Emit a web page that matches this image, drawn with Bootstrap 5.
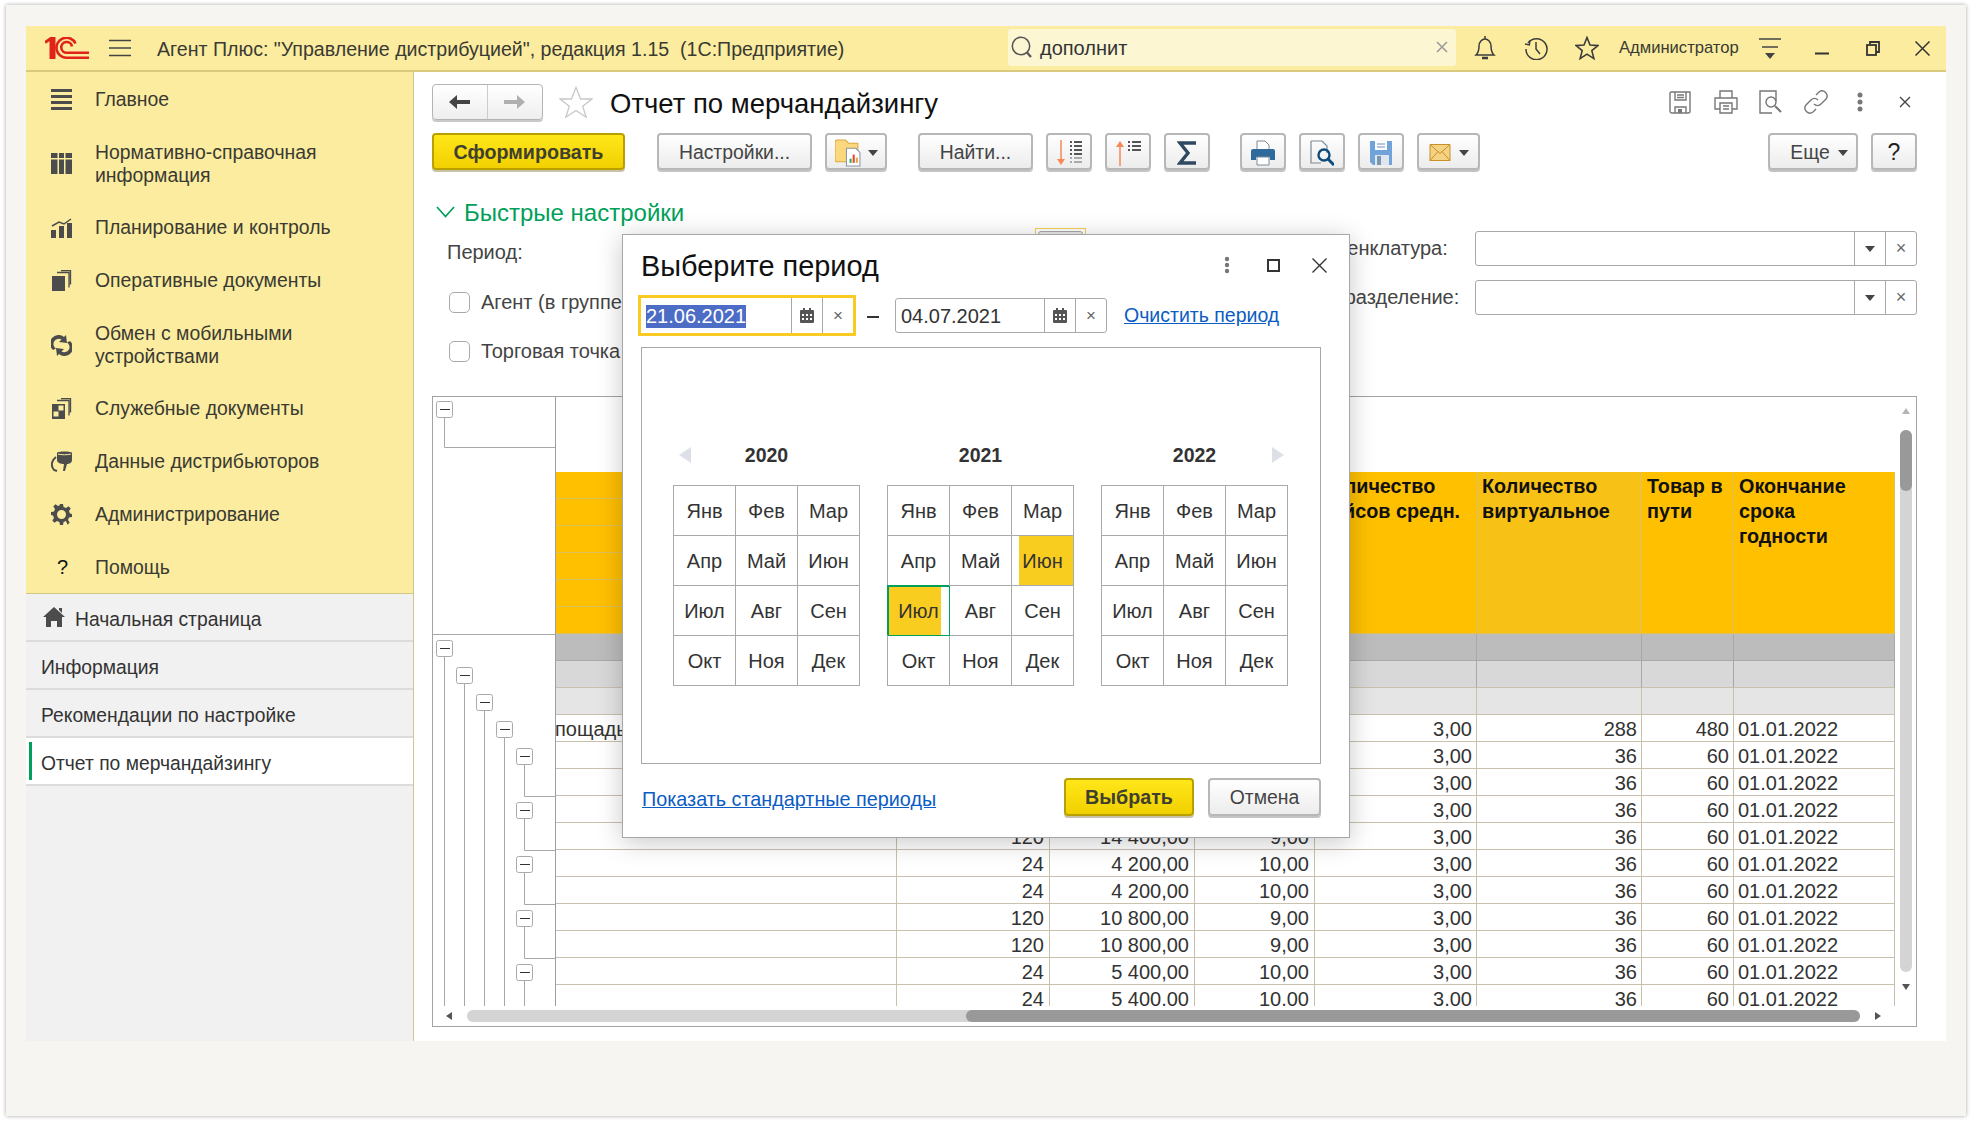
<!DOCTYPE html>
<html lang="ru">
<head>
<meta charset="utf-8">
<title>Отчет по мерчандайзингу</title>
<link href="https://cdn.jsdelivr.net/npm/bootstrap@5.3.0/dist/css/bootstrap.min.css" rel="stylesheet">
<style>
html,body{height:100%;background:#fff;overflow:hidden}
body{font-family:"Liberation Sans",Arial,sans-serif;font-size:20px;color:#333;line-height:23px}
.sheet{margin:5px 6px 0;height:1111px;background:#f6f5f2;box-shadow:0 0 4px rgba(0,0,0,.35);padding:21px 20px 0}
.win{width:1920px;height:1015px;background:#fff;position:relative;overflow:hidden}
.topbar{height:46px;background:#fbeca0;border-bottom:2px solid #d9ca80;padding:0 16px 0 19px;color:#3a3a32}
.topbar .ttl{width:851px;margin-left:26px;font-size:19.6px;white-space:pre;padding-top:2px}
.srch{width:448px;height:37px;margin-top:-2px;background:#fdf6d3;border-radius:3px;padding:0 8px 0 3px;font-size:20px;color:#333}
.srch .stxt{margin-left:6px;padding-top:3px}
.adm{width:120px;font-size:16.6px;margin-top:-2px;white-space:nowrap}
.sl17{margin-left:17px}.sl20{margin-left:20px}.sl21{margin-left:21px}.sl22{margin-left:22px}.sl26{margin-left:26px}.sl27{margin-left:27px}.sl29{margin-left:29px}.sl32{margin-left:32px}.sl34{margin-left:34px}.sl35{margin-left:35px}.sl36{margin-left:36px}.sl37{margin-left:37px}
.appbody{height:969px}
.side{width:388px;flex:none;background:#f1f1f1;border-right:1px solid #cfc68a}
.smenu{background:#fbeca0;border-bottom:1px solid #d4c785;height:522px;flex:none}
.sitem{height:53px;padding-left:25px;color:#3a3a32;font-size:19.4px}
.sitem svg{width:21px;height:21px;flex:none;margin-right:23px;fill:#4c4c4c}
.sitem:nth-child(1){height:54px}.sitem:nth-child(2){height:75px}.sitem:nth-child(3){height:53px}
.sitem:nth-child(5){height:76px}.sitem:nth-child(6){height:51px}.sitem:nth-child(7){height:54px}
.tabi{height:48px;padding-left:15px;border-bottom:2px solid #dcdcdc;font-size:19.3px;color:#333;flex:none}
.tabi span{padding-top:4px}
.tabi svg{width:22px;height:20px;margin-right:10px;margin-left:2px;fill:#4c4c4c}
.tabi.on{background:#fff;position:relative}
.tabi.on::before{content:"";position:absolute;left:3px;top:4px;bottom:4px;width:3px;background:#00a05a}
.content{padding:12px 29px 14px 18px;min-width:0}
.hrow{height:36px;flex:none}
.navb{width:111px;height:36px;border:1px solid #b4b4b4;border-radius:4px;background:linear-gradient(#fff,#eee);box-shadow:0 2px 0 #c9c9c9}
.navb span{width:55px}
.navb span:first-child{border-right:1px solid #ccc}
.hstar{margin-left:16px;margin-right:17px}
.ptitle{font-size:27.5px;color:#111;white-space:nowrap;font-weight:400;margin:0;padding-top:3px}
.ticons{margin-right:6px}
.ticons svg{fill:none;stroke:#777;stroke-width:1.4}
.tbar{margin-top:13px;gap:13px;height:37px;flex:none}
.b1c{height:37px;padding:2px 0 0;border:2px solid #b7b7b7;border-radius:4px;background:linear-gradient(#fff,#ececec);box-shadow:0 2px 0 #c4c4c4;font-size:19.4px;color:#444;line-height:1;--bs-btn-hover-bg:#eee}
.b1c:hover{border-color:#b7b7b7;color:#444}
.b1y{border-color:#b9a000;background:linear-gradient(#ffe71a,#f1d000);box-shadow:0 2px 0 #c8c3a8;font-weight:700;font-size:19.7px;color:#3f3f2f}
.b1y:hover{border-color:#b9a000;color:#3f3f2f}
.bq{font-size:23px;color:#222}
.bmore{padding-left:12px}
.w193{width:193px}.w155{width:155px}.w62{width:62px}.w63{width:63px}.w115{width:115px}.w46{width:46px}.w90{width:90px}
.sp19{margin-left:19px}.sp18{margin-left:18px}.sp17{margin-left:17px}
.g7{gap:7px}
.tri{display:inline-block;width:0;height:0;border:5px solid transparent;border-top:6px solid #444;border-bottom:0}
.qhead{margin-top:28px;height:28px;color:#00a05a;font-size:24px;flex:none;padding-left:4px}
.qhead svg{margin-right:9px}
.filt{height:170px;flex:none}
.fl{width:654px;padding-left:15px;padding-top:14px;color:#444}
.flrow{height:24px}
.flrow+.flrow{margin-top:26px}
.flrow+.flrow+.flrow{margin-top:25px}
.flper{padding-top:1px}
.peek{margin-top:-12px;width:51px;height:48px;border:1px solid #f4cf54;padding:2px}
.peek i{display:block;height:44px;border:1px solid #aaa;border-radius:3px;background:#e8e8e8}
.chk{width:21px;height:21px;margin:0 11px 0 2px;border:1px solid #aaa;border-radius:3px;float:none;flex:none}
.fr{padding-top:5px;color:#444}
.frow{height:35px}
.frow+.frow{margin-top:14px}
.flab{width:167px;white-space:nowrap}
.finp{width:442px;height:35px;border:1px solid #a8a8a8;border-radius:3px;background:#fff}
.fc{width:31px;border-left:1px solid #a8a8a8}
.fc.x{color:#666;font-size:18px}
.report{flex:1 1 0;min-height:0;border:1px solid #a3a3a3;background:#fff}
.rtop{flex:1 1 0;min-height:0}
.tree{width:123px;flex:none;border-right:1px solid #9e9e9e}
.tree svg{display:block}
.rview{width:1339px;flex:none;overflow:hidden}
.rep{border-collapse:separate;border-spacing:0;table-layout:fixed;width:1339px;font-size:20px;color:#333}
.rep col:nth-child(1){width:341px}.rep col:nth-child(2){width:153px}.rep col:nth-child(3){width:145px}.rep col:nth-child(4){width:120px}
.rep col:nth-child(5){width:162px}.rep col:nth-child(6){width:165px}.rep col:nth-child(7){width:92px}.rep col:nth-child(8){width:161px}
.rep td{height:27px;padding:2px 4px 0;line-height:23px;white-space:nowrap;overflow:hidden;border-right:1px solid #c9c0ae;border-bottom:1px solid #c9c0ae;text-align:right}
.rep td:nth-child(2),.rep td:nth-child(3),.rep td:nth-child(4){padding-right:5px}
.rep td.dt{text-align:left;padding-left:4px}
.rep td.lt{text-align:left;padding-left:0;text-indent:-1px}
.rep tr.blank td{height:75px;border:0}
.rep tr.hd td{background:#ffc000;border-color:#e0c25c;text-align:left;vertical-align:top;font-weight:700;color:#111;line-height:25px;padding:2px 5px 0;white-space:normal;font-size:19.8px}
.rep tr.hd td.y2{background:#f8c115}
.rep tr.hd td.y1{font-weight:400;height:27px}
.rep tr.g1 td{background:#bcbcbc;border-color:#a8a8a8}
.rep tr.g2 td{background:#d8d8d8;border-color:#a8a8a8}
.rep tr.g2 td{border-bottom-color:#c9c0ae}
.rep tr.g3 td{background:#e5e5e5}
.vs{width:22px;flex:none;padding-top:11px}
.vtr{width:12px;height:542px;margin-top:16px;margin-bottom:12px;background:#d4d4d4;border-radius:6px}
.vth{height:61px;background:#999;border-radius:6px}
.hs{height:20px;flex:none;padding-left:13px}
.htr{width:1393px;height:12px;margin-left:15px;margin-right:15px;background:#d4d4d4;border-radius:6px}
.hth{width:894px;height:12px;margin-left:auto;background:#999;border-radius:6px}
.tu{border:4px solid transparent;border-bottom:6px solid #b5b5b5;border-top:0;width:0;height:0}
.td{border:4px solid transparent;border-top:6px solid #555;border-bottom:0;width:0;height:0}
.tl{border:4px solid transparent;border-right:6px solid #555;border-left:0;width:0;height:0}
.tr{border:4px solid transparent;border-left:6px solid #555;border-right:0;width:0;height:0}
.dlg{position:absolute;left:596px;top:208px;width:728px;height:604px;background:#fff;border:1px solid #a6a6a6;box-shadow:0 4px 24px rgba(0,0,0,.22);padding:0 28px 0 15px}
.dhead{height:59px;padding-top:1px}
.dtitle{font-size:28.9px;color:#111;margin:0;font-weight:400;padding:3px 0 0 3px}
.dico{margin-right:-6px}
.drow{height:42px;flex:none}
.focb{width:218px;height:41px;border:3px solid #f9ca24}
.fldb{width:212px;height:35px;border:1px solid #aaa;border-radius:3px;margin-left:16px}
.dtxt{padding:2px 0 0 5px;font-size:20px;color:#333}
.sel{background:#4c6cc6;color:#fff;display:inline-block;height:23px;line-height:23px}
.dc{width:31px;height:100%;border-left:1px solid #a8a8a8;color:#666;font-size:17px}
.dash{width:12px;height:2px;background:#333;margin-left:11px;margin-top:3px}
.lnk{color:#0b5cc4;text-decoration:underline}
.lclr{margin-left:17px;font-size:19.5px;padding-top:1px}
.cal{width:680px;height:417px;margin:11px 0 0 3px;border:1px solid #a8a8a8;padding:92px 31px 0;flex:none}
.years,.grids{display:grid;grid-template-columns:repeat(3,187px);column-gap:27px}
.years{height:30px;margin-bottom:15px;font-weight:700;font-size:19.5px;color:#333}
.yr{display:grid;grid-template-columns:1fr auto 1fr;align-items:center}
.al{border:8px solid transparent;border-right:12px solid #dde0e6;border-left:0;width:0;height:0;margin-left:6px}
.ar{border:8px solid transparent;border-left:12px solid #dde0e6;border-right:0;width:0;height:0;justify-self:end;margin-right:4px}
.mgrid{display:grid;grid-template-columns:repeat(3,62px);border-top:1px solid #aaa;border-left:1px solid #aaa}
.mc{height:50px;padding-top:2px;border-right:1px solid #aaa;border-bottom:1px solid #aaa;font-size:20px;color:#333}
.mc.cur{background:linear-gradient(90deg,#fff 7px,#f9cd20 7px)}
.mc.end{background:linear-gradient(90deg,#f9cd20 53px,#fff 53px);border-color:#00a05a;box-shadow:inset 1px 1px 0 #00a05a,-1px -1px 0 #00a05a}
.dfoot{margin:14px 0 0 3px;height:38px;width:680px;flex:none}
.lshow{font-size:19.8px;padding:5px 0 0 1px}
.bvb{width:130px;height:38px}
.bcn{width:113px;height:38px;margin-left:14px}
</style>
</head>
<body>
<div class="sheet">
<div class="win">
  <header class="topbar d-flex align-items-center">
    <svg width="44" height="22" viewBox="0 0 44 22" fill="none" stroke="#e2231a" stroke-width="2.6"><path d="M0 5.5 L6 1.3 H9 V22 M6 1.5 V22" stroke-width="3"/><path d="M30.5 6.5 A10 10 0 1 0 22 20.7 H44"/><path d="M27 9.5 A5.4 5.4 0 1 0 22 15.8 H44"/></svg>
    <svg class="sl20" width="22" height="18" viewBox="0 0 22 18" stroke="#444" stroke-width="1.6"><path d="M0 1.5h22M0 9h22M0 16.500h22"/></svg>
    <div class="ttl">Агент Плюс: "Управление дистрибуцией", редакция 1.15  (1С:Предприятие)</div>
    <div class="srch d-flex align-items-center">
      <svg width="23" height="22" viewBox="0 0 23 22" fill="none" stroke="#555" stroke-width="1.5"><circle cx="10" cy="10" r="8.700"/><path d="M16 16.500l4 4.500" stroke-width="2.2"/></svg>
      <span class="stxt flex-grow-1">дополнит</span>
      <svg width="12" height="12" viewBox="0 0 12 12" stroke="#999" stroke-width="1.5"><path d="M1 1l10 10M11 1L1 11"/></svg>
    </div>
    <svg class="sl17" width="24" height="26" viewBox="0 0 24 26" fill="none" stroke="#3c3c3c" stroke-width="1.500"><path d="M3 20c2-2 3-4 3-9 0-4 3-7 6-7s6 3 6 7c0 5 1 7 3 9zM12 1v3"/><path d="M9 23h6" stroke-width="2.500"/></svg>
    <svg class="sl27" width="24" height="24" viewBox="0 0 24 24" fill="none" stroke="#3c3c3c" stroke-width="1.500"><path d="M4 7a10.500 10.500 0 1 1-2 6"/><path d="M1 8l4.500 1L6 4.500" stroke-width="1.300"/><path d="M12 6v7l4 5"/></svg>
    <svg class="sl27" width="24" height="24" viewBox="0 0 24 24" fill="none" stroke="#3c3c3c" stroke-width="1.600"><path d="M12 1.500l3 7.500 8 .6-6.200 5 2.100 8L12 18.200 5.100 22.600l2.100-8L1 9.600 9 9z"/></svg>
    <div class="adm sl20">Администратор</div>
    <svg class="sl20" width="22" height="21" viewBox="0 0 22 21" stroke="#444" stroke-width="1.500"><path d="M0 1h22M3 9h16"/><path d="M6 15h10l-5 6z" fill="#444" stroke="none"/></svg>
    <svg class="sl34" width="14" height="14" viewBox="0 0 14 14" stroke="#333" stroke-width="2"><path d="M0 12.500h14"/></svg>
    <svg class="sl37" width="14" height="15" viewBox="0 0 14 15" fill="none" stroke="#333" stroke-width="1.800"><path d="M4 3V1h9v10h-3"/><rect x="1" y="4" width="9" height="10"/></svg>
    <svg class="sl35" width="15" height="15" viewBox="0 0 15 15" stroke="#333" stroke-width="1.500"><path d="M.5.500l14 14M14.500.500l-14 14"/></svg>
  </header>
  <div class="appbody d-flex">
    <aside class="side d-flex flex-column">
      <nav class="smenu">
        <div class="sitem d-flex align-items-center"><svg viewBox="0 0 21 21"><path d="M0 0h21v3H0zM0 6h21v3H0zM0 12h21v3H0zM0 18h21v3H0z"/></svg><span>Главное</span></div>
        <div class="sitem d-flex align-items-center"><svg viewBox="0 0 21 21"><path d="M0 0h21v21H0z"/><path d="M0 5h21v1.500H0zM6.500 0H8v21H6.500zM13 0h1.500v21H13z" fill="#fbeca0"/></svg><span>Нормативно-справочная<br>информация</span></div>
        <div class="sitem d-flex align-items-center"><svg viewBox="0 0 21 21"><path d="M0 13h5v8H0zM8 9h5v12H8zM16 6h5v15h-5z"/><path d="M1 9l7-4 5 2 7-5" fill="none" stroke="#4c4c4c" stroke-width="1.500"/></svg><span>Планирование и контроль</span></div>
        <div class="sitem d-flex align-items-center"><svg viewBox="0 0 21 21"><path d="M1 6h13v15H1z"/><path d="M6 2.500h12v15M10 .500h9.500v14" fill="none" stroke="#4c4c4c" stroke-width="1.300"/></svg><span>Оперативные документы</span></div>
        <div class="sitem d-flex align-items-center"><svg viewBox="0 0 21 21"><path d="M2 15A8.500 8.500 0 0 1 13 2l2-2 1 8-8-1 2.500-2.500A5 5 0 0 0 5 13.500zM19 6a8.500 8.500 0 0 1-11 13l-2 2-1-8 8 1-2.500 2.500A5 5 0 0 0 16 7.500z"/></svg><span>Обмен с мобильными<br>устройствами</span></div>
        <div class="sitem d-flex align-items-center"><svg viewBox="0 0 21 21"><path d="M1 6h13v15H1z"/><path d="M7.500 7.500h5v5h-5zM2.500 13.500h5v5h-5z" fill="#fbeca0"/><path d="M6 2.500h12v15M10 .500h9.500v14" fill="none" stroke="#4c4c4c" stroke-width="1.300"/></svg><span>Служебные документы</span></div>
        <div class="sitem d-flex align-items-center"><svg viewBox="0 0 21 21"><path d="M6 2c0-2 15-2 15 0v7c0 3-3 4-5 4l-2 7h-2l1-7c-3 0-7-1-7-4z"/><path d="M5 6C1 9-1 14 3 19l3 1" fill="none" stroke="#4c4c4c" stroke-width="2"/><path d="M7 3c3 1 10 1 13 0" fill="none" stroke="#fbeca0"/></svg><span>Данные дистрибьюторов</span></div>
        <div class="sitem d-flex align-items-center"><svg viewBox="0 0 21 21"><path fill-rule="evenodd" d="M9 0h3l.6 3 2.400 1 2.600-1.700 2.100 2.100L18 7l1 2.400 2 .6v3l-3 .6-1 2.400 1.700 2.600-2.100 2.100L15 17l-2.400 1-.6 3H9l-.6-3L6 17l-2.600 1.700-2.100-2.100L3 14l-1-2.400-2-.6V8l3-.6L4 5 2.300 2.400l2.100-2.100L7 2l1.400-.5zM10.500 6a4.500 4.500 0 1 0 0 9 4.500 4.500 0 0 0 0-9z"/></svg><span>Администрирование</span></div>
        <div class="sitem d-flex align-items-center"><svg viewBox="0 0 21 21"><text x="6" y="17" font-family="Liberation Sans" font-size="20" fill="#111">?</text></svg><span>Помощь</span></div>
      </nav>
      <div class="tabi d-flex align-items-center"><svg viewBox="0 0 22 20"><path d="M11 0l11 10h-3v10h-5v-6H8v6H3V10H0zM16 1h3v5l-3-3z"/></svg><span>Начальная страница</span></div>
      <div class="tabi d-flex align-items-center"><span>Информация</span></div>
      <div class="tabi d-flex align-items-center"><span>Рекомендации по настройке</span></div>
      <div class="tabi on d-flex align-items-center"><span>Отчет по мерчандайзингу</span></div>
    </aside>
    <main class="content flex-grow-1 d-flex flex-column">
      <div class="hrow d-flex align-items-center">
        <div class="navb d-flex">
          <span class="d-flex align-items-center justify-content-center"><svg width="21" height="16" viewBox="0 0 21 16" fill="#444"><path d="M0 8l8-7v5h13v4H8v5z"/></svg></span>
          <span class="d-flex align-items-center justify-content-center"><svg width="21" height="16" viewBox="0 0 21 16" fill="#b0b0b0"><path d="M21 8l-8-7v5H0v4h13v5z"/></svg></span>
        </div>
        <svg class="hstar" width="34" height="32" viewBox="0 0 34 32" fill="#fff" stroke="#c8c8c8" stroke-width="1.300"><path d="M17 1.500l4.600 11.500H33l-9.300 7.200 3.500 11L17 24.500 6.800 31.200l3.500-11L1 13h11.400z"/></svg>
        <h1 class="ptitle">Отчет по мерчандайзингу</h1>
        <div class="ticons ms-auto d-flex align-items-center">
          <svg width="23" height="23" viewBox="0 0 23 23"><path d="M2 1h19v19a2 2 0 0 1-2 2H3a2 2 0 0 1-2-2V2zM6 1v8h11V1M6 22v-6h11v6M8 4h7M8 6.500h7"/><rect x="9" y="18" width="4" height="4" fill="#777" stroke="none"/></svg>
          <svg class="sl22" width="24" height="24" viewBox="0 0 24 24"><path d="M6 8V1h12v7M6 19H1V8h22v11h-5M6 13h12v10H6zM9 16h6M9 19h6"/></svg>
          <svg class="sl21" width="23" height="24" viewBox="0 0 23 24"><path d="M13 23H1V1h16v10"/><circle cx="12" cy="12" r="5"/><path d="M16 16l6 6" stroke-width="2"/></svg>
          <svg class="sl22" width="24" height="24" viewBox="0 0 24 24"><path d="M10 14a5 5 0 0 0 7 0l5-5a5 5 0 0 0-7-7l-3 3M14 10a5 5 0 0 0-7 0l-5 5a5 5 0 0 0 7 7l3-3"/></svg>
          <svg class="sl29" width="6" height="20" viewBox="0 0 6 20"><circle cx="3" cy="3" r="2.500" fill="#777" stroke="none"/><circle cx="3" cy="10" r="2.500" fill="#777" stroke="none"/><circle cx="3" cy="17" r="2.500" fill="#777" stroke="none"/></svg>
          <svg class="sl36" width="12" height="12" viewBox="0 0 12 12"><path d="M1 1l10 10M11 1L1 11" stroke="#444"/></svg>
        </div>
      </div>
      <div class="tbar d-flex">
        <button type="button" class="btn b1c b1y w193">Сформировать</button>
        <button type="button" class="btn b1c w155 sp19">Настройки...</button>
        <button type="button" class="btn b1c w62 d-flex align-items-center justify-content-center g7"><svg width="26" height="28" viewBox="0 0 25 27"><path d="M0 3a2 2 0 0 1 2-2h8l3 3h9v18H2a2 2 0 0 1-2-2z" fill="#fbd77e" stroke="#dca93d"/><path d="M11 9h9l4 4v13H11z" fill="#fff" stroke="#8796a8"/><path d="M14 19h2v4h-2z" fill="#3aa655"/><path d="M17 15h2v8h-2z" fill="#e0483a"/><path d="M20 18h2v5h-2z" fill="#e8a33a"/></svg><span class="tri"></span></button>
        <button type="button" class="btn b1c w115 sp18">Найти...</button>
        <button type="button" class="btn b1c w46 d-flex align-items-center justify-content-center"><svg width="26" height="26" viewBox="0 0 26 26"><path d="M5 0v23" stroke="#f58a55" stroke-width="1.500"/><path d="M1 19l4 6 4-6z" fill="#f58a55"/><path d="M14 2h2M18 2h8M14 6h2M18 6h8M14 10h2M18 10h8M14 14h2M18 14h8" stroke="#555" stroke-width="2"/><path d="M14 18h2M18 18h8M14 22h2M18 22h8" stroke="#aaa" stroke-width="2"/></svg></button>
        <button type="button" class="btn b1c w46 d-flex align-items-center justify-content-center"><svg width="26" height="26" viewBox="0 0 26 26"><path d="M5 26V3" stroke="#f58a55" stroke-width="1.500"/><path d="M1 7l4-6 4 6z" fill="#f58a55"/><path d="M13 2h2M17 2h9M13 6h2M17 6h9M13 10h2M17 10h9" stroke="#555" stroke-width="2"/></svg></button>
        <button type="button" class="btn b1c w46 d-flex align-items-center justify-content-center"><svg width="20" height="24" viewBox="0 0 20 24" fill="none" stroke="#2f4a60" stroke-width="3.400"><path d="M19 2H3l8 10-8 10h16"/></svg></button>
        <button type="button" class="btn b1c w46 sp17 d-flex align-items-center justify-content-center"><svg width="24" height="26" viewBox="0 0 24 26"><path d="M6 1h8l4 4v5H6z" fill="#fff" stroke="#7d8a96"/><path d="M2 9h20a2 2 0 0 1 2 2v9h-5v-3H5v3H0v-9a2 2 0 0 1 2-2z" fill="#2f6a9c"/><path d="M6 17h12v8H6z" fill="#fff" stroke="#7d8a96"/></svg></button>
        <button type="button" class="btn b1c w46 d-flex align-items-center justify-content-center"><svg width="24" height="26" viewBox="0 0 24 26" fill="none"><path d="M1 1h11l5 5v7M1 1v22h10" stroke="#7d8a96" stroke-width="1.200"/><circle cx="14" cy="15" r="5.500" stroke="#0d4c7d" stroke-width="2.400"/><path d="M18 19l6 6" stroke="#0d4c7d" stroke-width="3"/></svg></button>
        <button type="button" class="btn b1c w46 d-flex align-items-center justify-content-center"><svg width="22" height="24" viewBox="0 0 22 24"><path d="M0 0h22v24H3l-3-3z" fill="#6fa3d9"/><path d="M5 0h12v9H5z" fill="#fff"/><path d="M7 3h8M7 6h8" stroke="#6f90b8"/><path d="M5 14h14v10H5z" fill="#dfe6ee"/><path d="M7 15h4v9H7z" fill="#7b97ad"/></svg></button>
        <button type="button" class="btn b1c w63 d-flex align-items-center justify-content-center gap-2"><svg width="22" height="17" viewBox="0 0 22 17"><path d="M1 .5h20v16H1z" fill="#f6d283" stroke="#c88f2a"/><path d="M1 .5l10 9 10-9M1 16.500l8-9M21 16.500l-8-9" fill="none" stroke="#c88f2a"/></svg><span class="tri"></span></button>
        <button type="button" class="btn b1c w90 bmore ms-auto d-flex align-items-center justify-content-center gap-2">Еще<span class="tri"></span></button>
        <button type="button" class="btn b1c w46 bq">?</button>
      </div>
      <div class="qhead d-flex align-items-center"><svg width="19" height="12" viewBox="0 0 19 12" fill="none" stroke="#00a05a" stroke-width="1.700"><path d="M1 1l8.500 9.500L18 1"/></svg>Быстрые настройки</div>
      <section class="filt d-flex justify-content-between">
        <div class="fl">
          <div class="flrow d-flex justify-content-between align-items-start"><span class="flper">Период:</span><div class="peek"><i></i></div></div>
          <div class="flrow d-flex align-items-center"><input class="form-check-input chk" type="checkbox" aria-label="Агент"><span>Агент (в группе)</span></div>
          <div class="flrow d-flex align-items-center"><input class="form-check-input chk" type="checkbox" aria-label="Торговая точка"><span>Торговая точка</span></div>
        </div>
        <div class="fr">
          <div class="frow d-flex align-items-center"><span class="flab">Номенклатура:</span><div class="finp d-flex"><span class="flex-grow-1"></span><span class="fc d-flex align-items-center justify-content-center"><span class="tri"></span></span><span class="fc x d-flex align-items-center justify-content-center">×</span></div></div>
          <div class="frow d-flex align-items-center"><span class="flab">Подразделение:</span><div class="finp d-flex"><span class="flex-grow-1"></span><span class="fc d-flex align-items-center justify-content-center"><span class="tri"></span></span><span class="fc x d-flex align-items-center justify-content-center">×</span></div></div>
        </div>
      </section>
      <section class="report d-flex flex-column">
        <div class="rtop d-flex">
          <div class="tree">
            <svg width="122" height="609" viewBox="433 397 122 609" fill="none" stroke="#a8a8a8">
              <path d="M444.500 418V447.500H555M433 634.500H555M444.500 657V1006M464.500 684V1006M484.500 711V1006M504.500 738V1006M524.500 765V796.500H555M524.500 819V850.500H555M524.500 873V904.500H555M524.500 927V958.500H555M524.500 981V1006"/>
              <g fill="#fff" stroke="#aaa"><rect x="436.500" y="401.500" width="16" height="16" rx="2"/><rect x="436.500" y="640.500" width="16" height="16" rx="2"/><rect x="456.500" y="667.500" width="16" height="16" rx="2"/><rect x="476.500" y="694.500" width="16" height="16" rx="2"/><rect x="496.500" y="721.500" width="16" height="16" rx="2"/><rect x="516.500" y="748.500" width="16" height="16" rx="2"/><rect x="516.500" y="802.500" width="16" height="16" rx="2"/><rect x="516.500" y="856.500" width="16" height="16" rx="2"/><rect x="516.500" y="910.500" width="16" height="16" rx="2"/><rect x="516.500" y="964.500" width="16" height="16" rx="2"/></g>
              <path stroke="#333" d="M440 409.500h10M440 648.500h10M460 675.500h10M480 702.500h10M500 729.500h10M520 756.500h10M520 810.500h10M520 864.500h10M520 918.500h10M520 972.500h10"/>
            </svg>
          </div>
          <div class="rview">
            <table class="rep">
              <colgroup><col><col><col><col><col><col><col><col></colgroup>
              <tr class="blank"><td colspan="8"></td></tr>
              <tr class="hd"><td class="y1"></td><td rowspan="6"></td><td rowspan="6"></td><td rowspan="6"></td><td rowspan="6">Количество рейсов средн.</td><td rowspan="6" class="y2">Количество виртуальное</td><td rowspan="6">Товар в пути</td><td rowspan="6">Окончание срока годности</td></tr>
              <tr class="hd"><td class="y1"></td></tr>
              <tr class="hd"><td class="y1"></td></tr>
              <tr class="hd"><td class="y1"></td></tr>
              <tr class="hd"><td class="y1"></td></tr>
              <tr class="hd"><td class="y1"></td></tr>
              <tr class="g1"><td></td><td></td><td></td><td></td><td></td><td></td><td></td><td></td></tr>
              <tr class="g2"><td></td><td></td><td></td><td></td><td></td><td></td><td></td><td></td></tr>
              <tr class="g3"><td></td><td></td><td></td><td></td><td></td><td></td><td></td><td></td></tr>
              <tr><td class="lt">пощадь</td><td></td><td></td><td></td><td>3,00</td><td>288</td><td>480</td><td class="dt">01.01.2022</td></tr>
              <tr><td></td><td></td><td></td><td></td><td>3,00</td><td>36</td><td>60</td><td class="dt">01.01.2022</td></tr>
              <tr><td></td><td></td><td></td><td></td><td>3,00</td><td>36</td><td>60</td><td class="dt">01.01.2022</td></tr>
              <tr><td></td><td></td><td></td><td></td><td>3,00</td><td>36</td><td>60</td><td class="dt">01.01.2022</td></tr>
              <tr><td></td><td>120</td><td>14 400,00</td><td>9,00</td><td>3,00</td><td>36</td><td>60</td><td class="dt">01.01.2022</td></tr>
              <tr><td></td><td>24</td><td>4 200,00</td><td>10,00</td><td>3,00</td><td>36</td><td>60</td><td class="dt">01.01.2022</td></tr>
              <tr><td></td><td>24</td><td>4 200,00</td><td>10,00</td><td>3,00</td><td>36</td><td>60</td><td class="dt">01.01.2022</td></tr>
              <tr><td></td><td>120</td><td>10 800,00</td><td>9,00</td><td>3,00</td><td>36</td><td>60</td><td class="dt">01.01.2022</td></tr>
              <tr><td></td><td>120</td><td>10 800,00</td><td>9,00</td><td>3,00</td><td>36</td><td>60</td><td class="dt">01.01.2022</td></tr>
              <tr><td></td><td>24</td><td>5 400,00</td><td>10,00</td><td>3,00</td><td>36</td><td>60</td><td class="dt">01.01.2022</td></tr>
              <tr><td></td><td>24</td><td>5 400,00</td><td>10,00</td><td>3,00</td><td>36</td><td>60</td><td class="dt">01.01.2022</td></tr>
            </table>
          </div>
          <div class="vs d-flex flex-column align-items-center">
            <span class="tu"></span>
            <div class="vtr"><div class="vth"></div></div>
            <span class="td"></span>
          </div>
        </div>
        <div class="hs d-flex align-items-center">
          <span class="tl"></span>
          <div class="htr d-flex"><div class="hth"></div></div>
          <span class="tr"></span>
        </div>
      </section>
    </main>
  </div>

  <div class="dlg d-flex flex-column" role="dialog" aria-label="Выберите период">
    <div class="dhead d-flex justify-content-between align-items-center">
      <h2 class="dtitle">Выберите период</h2>
      <div class="dico d-flex align-items-center">
        <svg width="6" height="18" viewBox="0 0 6 18" fill="#777"><circle cx="3" cy="3" r="2.200"/><circle cx="3" cy="9" r="2.200"/><circle cx="3" cy="15" r="2.200"/></svg>
        <svg class="sl37" width="13" height="13" viewBox="0 0 13 13" fill="none" stroke="#333" stroke-width="2"><rect x="1" y="1" width="11" height="11"/></svg>
        <svg class="sl32" width="15" height="15" viewBox="0 0 15 15" stroke="#333" stroke-width="1.400"><path d="M.5.500l14 14M14.500.500l-14 14"/></svg>
      </div>
    </div>
    <div class="drow d-flex align-items-center">
      <div class="focb d-flex align-items-center">
        <div class="dtxt flex-grow-1"><span class="sel">21.06.2021</span></div>
        <span class="dc d-flex align-items-center justify-content-center"><svg width="14" height="15" viewBox="0 0 14 15" fill="#555"><path d="M1 2h2V0h2v2h4V0h2v2h2a1 1 0 0 1 1 1v11a1 1 0 0 1-1 1H1a1 1 0 0 1-1-1V3a1 1 0 0 1 1-1z"/><path d="M2 6h2v2H2zM6 6h2v2H6zM10 6h2v2h-2zM2 10h2v2H2zM6 10h2v2H6zM10 10h2v2h-2z" fill="#fff"/></svg></span>
        <span class="dc d-flex align-items-center justify-content-center">×</span>
      </div>
      <span class="dash"></span>
      <div class="fldb d-flex align-items-center">
        <div class="dtxt flex-grow-1">04.07.2021</div>
        <span class="dc d-flex align-items-center justify-content-center"><svg width="14" height="15" viewBox="0 0 14 15" fill="#555"><path d="M1 2h2V0h2v2h4V0h2v2h2a1 1 0 0 1 1 1v11a1 1 0 0 1-1 1H1a1 1 0 0 1-1-1V3a1 1 0 0 1 1-1z"/><path d="M2 6h2v2H2zM6 6h2v2H6zM10 6h2v2h-2zM2 10h2v2H2zM6 10h2v2H6zM10 10h2v2h-2z" fill="#fff"/></svg></span>
        <span class="dc d-flex align-items-center justify-content-center">×</span>
      </div>
      <a href="#" class="lnk lclr">Очистить период</a>
    </div>
    <div class="cal">
      <div class="years">
        <div class="yr"><span class="al"></span><span>2020</span><span></span></div>
        <div class="yr"><span></span><span>2021</span><span></span></div>
        <div class="yr"><span></span><span>2022</span><span class="ar"></span></div>
      </div>
      <div class="grids">
        <div class="mgrid">
          <div class="mc d-flex align-items-center justify-content-center">Янв</div><div class="mc d-flex align-items-center justify-content-center">Фев</div><div class="mc d-flex align-items-center justify-content-center">Мар</div>
          <div class="mc d-flex align-items-center justify-content-center">Апр</div><div class="mc d-flex align-items-center justify-content-center">Май</div><div class="mc d-flex align-items-center justify-content-center">Июн</div>
          <div class="mc d-flex align-items-center justify-content-center">Июл</div><div class="mc d-flex align-items-center justify-content-center">Авг</div><div class="mc d-flex align-items-center justify-content-center">Сен</div>
          <div class="mc d-flex align-items-center justify-content-center">Окт</div><div class="mc d-flex align-items-center justify-content-center">Ноя</div><div class="mc d-flex align-items-center justify-content-center">Дек</div>
        </div>
        <div class="mgrid">
          <div class="mc d-flex align-items-center justify-content-center">Янв</div><div class="mc d-flex align-items-center justify-content-center">Фев</div><div class="mc d-flex align-items-center justify-content-center">Мар</div>
          <div class="mc d-flex align-items-center justify-content-center">Апр</div><div class="mc d-flex align-items-center justify-content-center">Май</div><div class="mc cur d-flex align-items-center justify-content-center">Июн</div>
          <div class="mc end d-flex align-items-center justify-content-center">Июл</div><div class="mc d-flex align-items-center justify-content-center">Авг</div><div class="mc d-flex align-items-center justify-content-center">Сен</div>
          <div class="mc d-flex align-items-center justify-content-center">Окт</div><div class="mc d-flex align-items-center justify-content-center">Ноя</div><div class="mc d-flex align-items-center justify-content-center">Дек</div>
        </div>
        <div class="mgrid">
          <div class="mc d-flex align-items-center justify-content-center">Янв</div><div class="mc d-flex align-items-center justify-content-center">Фев</div><div class="mc d-flex align-items-center justify-content-center">Мар</div>
          <div class="mc d-flex align-items-center justify-content-center">Апр</div><div class="mc d-flex align-items-center justify-content-center">Май</div><div class="mc d-flex align-items-center justify-content-center">Июн</div>
          <div class="mc d-flex align-items-center justify-content-center">Июл</div><div class="mc d-flex align-items-center justify-content-center">Авг</div><div class="mc d-flex align-items-center justify-content-center">Сен</div>
          <div class="mc d-flex align-items-center justify-content-center">Окт</div><div class="mc d-flex align-items-center justify-content-center">Ноя</div><div class="mc d-flex align-items-center justify-content-center">Дек</div>
        </div>
      </div>
    </div>
    <div class="dfoot d-flex align-items-center justify-content-between">
      <a href="#" class="lnk lshow">Показать стандартные периоды</a>
      <div class="d-flex">
        <button type="button" class="btn b1c b1y bvb">Выбрать</button>
        <button type="button" class="btn b1c bcn">Отмена</button>
      </div>
    </div>
  </div>
</div>
</div>
<script src="https://cdn.jsdelivr.net/npm/bootstrap@5.3.0/dist/js/bootstrap.bundle.min.js"></script>
</body>
</html>
